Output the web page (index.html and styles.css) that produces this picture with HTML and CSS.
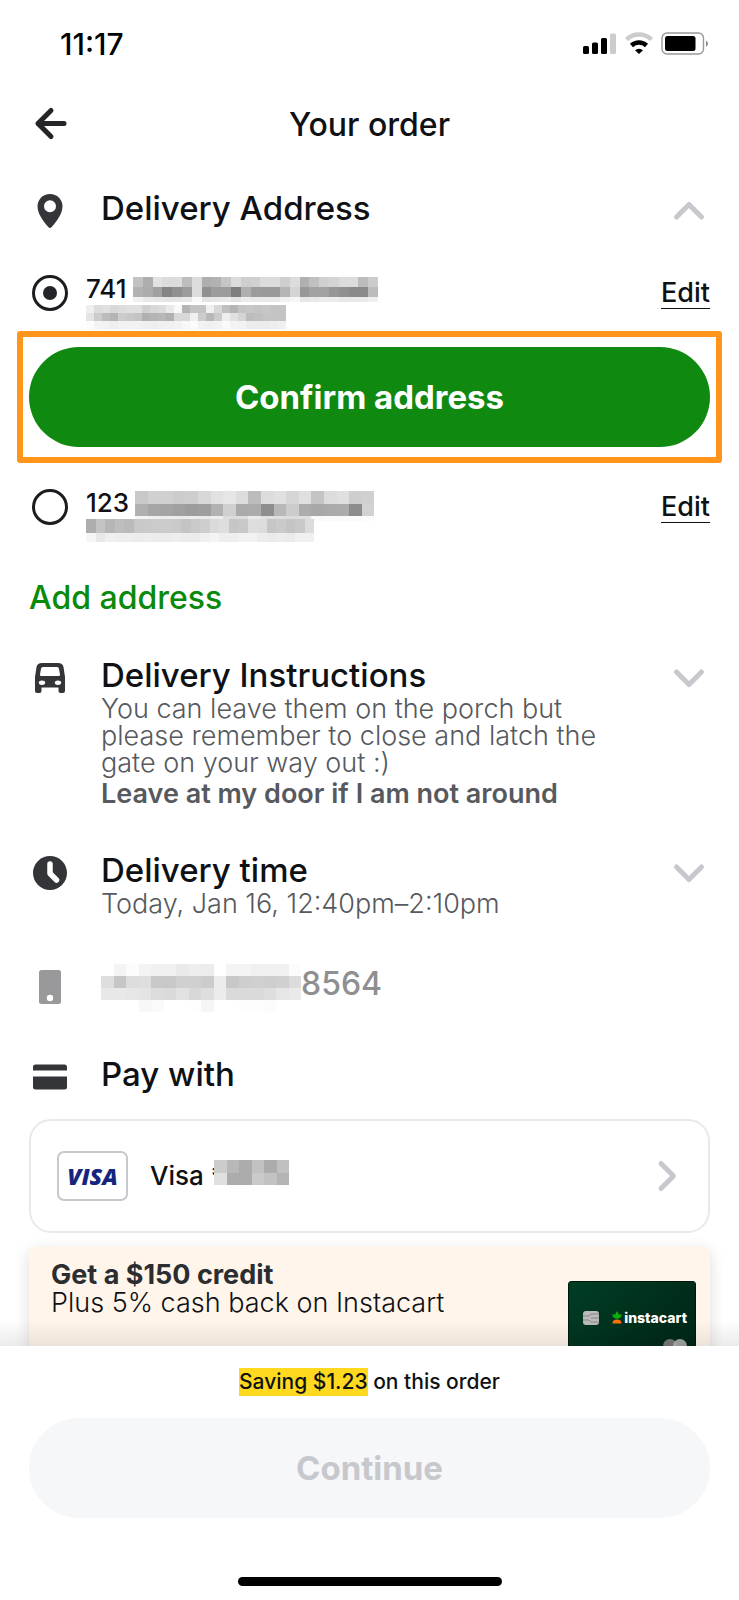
FILE: index.html
```html
<!DOCTYPE html>
<html lang="en">
  <head>
    <meta charset="utf-8">
    <meta name="viewport" content="width=device-width, initial-scale=1">
    <title>Your order</title>
    <link rel="stylesheet" href="styles.css">
  </head>
  <body>
    <main class="page">
      <div class="status-bar">
        <span class="clock">11:17</span>
        <svg class="status-icons" width="128" height="24" viewBox="0 0 128 24" aria-hidden="true">
          <rect x="1" y="14" width="6" height="8" rx="1.5"/>
          <rect x="10" y="10.500" width="6" height="11.500" rx="1.500"/>
          <rect x="19" y="6" width="6" height="16" rx="1.500"/>
          <rect x="28" y="1.500" width="6" height="20.500" rx="1.500" fill="#ccc"/>
          <path d="M44.500 7.500a18 18 0 0 1 25 0" fill="none" stroke="#ccc" stroke-width="4.500"/>
          <path d="M49.500 13.500a11 11 0 0 1 15 0" fill="none" stroke="#000" stroke-width="4.500"/>
          <path d="M57 22l-4-3.800a6 6 0 0 1 8 0z"/>
          <rect x="80" y="1" width="41.500" height="21" rx="5" fill="none" stroke="#999" stroke-width="1.400"/>
          <rect x="83" y="4" width="30.500" height="15" rx="2.500"/>
          <path d="M124 8.500q4 3 0 6.500z" fill="#888"/>
        </svg>
      </div>

      <header class="header">
        <button class="icon-button" type="button" aria-label="Back">
          <svg width="42" height="40" viewBox="0 0 42 40">
            <path d="M22 5.500L9 18.500l13 13M9 18.500h26" fill="none" stroke="#242529" stroke-width="5" stroke-linecap="round" stroke-linejoin="round"/>
          </svg>
        </button>
        <h1>Your order</h1>
      </header>

      <section class="row address-head">
        <svg class="icon" width="42" height="40" viewBox="0 0 42 40">
          <path fill-rule="evenodd" d="M21 3C14 3 8.500 8.500 8.500 15.200c0 7 5.500 15 10.800 20.800q1.700 2 3.400 0c5.300-5.800 10.800-13.800 10.800-20.800C33.500 8.500 28 3 21 3zm0 6.200a6 6 0 1 1 0 12 6 6 0 0 1 0-12z"/>
        </svg>
        <h2>Delivery Address</h2>
        <button class="icon-button chevron" type="button" aria-label="Hide addresses">
          <svg width="42" height="40" viewBox="0 0 42 40"><path d="M8.500 26L21 13.500 33.500 26"/></svg>
        </button>
      </section>

      <div class="option">
        <input type="radio" name="address" id="address-741" checked>
        <label for="address-741">
          <span class="line">741 <svg class="mosaic" data-mosaic="street1" aria-hidden="true"></svg></span>
          <svg class="mosaic" data-mosaic="city1" aria-hidden="true"></svg>
        </label>
        <a href="#" class="edit">Edit</a>
      </div>

      <div class="highlight">
        <button class="button confirm" type="button">Confirm address</button>
      </div>

      <div class="option">
        <input type="radio" name="address" id="address-123">
        <label for="address-123">
          <span class="line">123 <svg class="mosaic" data-mosaic="street2" aria-hidden="true"></svg></span>
          <svg class="mosaic" data-mosaic="city2" aria-hidden="true"></svg>
        </label>
        <a href="#" class="edit">Edit</a>
      </div>

      <a href="#" class="add-address">Add address</a>

      <section class="row">
        <svg class="icon" width="42" height="40" viewBox="0 0 42 40">
          <path fill-rule="evenodd" d="M13 5h16c3 0 5 1.500 5.500 4l1.500 10v14q0 2-2 2h-2.500q-2 0-2-2v-3.500h-17V33q0 2-2 2H8q-2 0-2-2V19L7.500 9C8 6.500 10 5 13 5zm1 4q-1.800 0-2 1.700l-1 5.800q-.2 1.500 1.200 1.500h17.600q1.400 0 1.200-1.500l-1-5.800Q29.800 9 28 9zM13 22.500c-2.400 0-3.200 1-3.200 2.200s.8 2.200 3.200 2.200 3.200-1 3.200-2.200-.8-2.200-3.200-2.200zm16 0c-2.400 0-3.200 1-3.200 2.200s.8 2.200 3.200 2.200 3.200-1 3.200-2.200-.8-2.200-3.200-2.200z"/>
        </svg>
        <div class="details">
          <h2>Delivery Instructions</h2>
          <p>You can leave them on the porch but please remember to close and latch the gate on your way out :)</p>
          <p class="strong">Leave at my door if I am not around</p>
        </div>
        <button class="icon-button chevron" type="button" aria-label="Edit delivery instructions">
          <svg width="42" height="40" viewBox="0 0 42 40"><path d="M8.500 14L21 26.500 33.500 14"/></svg>
        </button>
      </section>

      <section class="row time">
        <svg class="icon" width="42" height="40" viewBox="0 0 42 40">
          <circle cx="21" cy="20" r="17"/>
          <path d="M21 11v9.500l6.500 6.500" fill="none" stroke="#fff" stroke-width="5.500" stroke-linecap="round" stroke-linejoin="round"/>
        </svg>
        <div class="details">
          <h2>Delivery time</h2>
          <p>Today, Jan 16, 12:40pm–2:10pm</p>
        </div>
        <button class="icon-button chevron" type="button" aria-label="Edit delivery time">
          <svg width="42" height="40" viewBox="0 0 42 40"><path d="M8.500 14L21 26.500 33.500 14"/></svg>
        </button>
      </section>

      <section class="row phone">
        <svg class="icon" width="42" height="40" viewBox="0 0 42 40">
          <rect x="10" y="3" width="22" height="34" rx="2.500"/>
          <circle cx="21" cy="31" r="3.200" fill="#fff"/>
        </svg>
        <div class="number"><svg class="mosaic" data-mosaic="phone" aria-hidden="true"></svg>8564</div>
      </section>

      <section class="row pay">
        <svg class="icon" width="42" height="40" viewBox="0 0 42 40">
          <path d="M4 13.500V10q0-2.500 2.500-2.500h29Q38 7.500 38 10v3.500zM4 19.500h34V30q0 2.500-2.500 2.500h-29Q4 32.500 4 30z"/>
        </svg>
        <h2>Pay with</h2>
      </section>

      <button class="payment" type="button">
        <span class="visa">VISA</span>
        <span class="payment-name">Visa *<svg class="mosaic" data-mosaic="card" aria-hidden="true"></svg></span>
        <svg class="next" width="24" height="40" viewBox="0 0 24 40"><path d="M5 7.500L17.500 20 5 32.500"/></svg>
      </button>

      <section class="promo">
        <div class="promo-text">
          <h3>Get a $150 credit</h3>
          <p>Plus 5% cash back on Instacart</p>
        </div>
        <div class="credit-card">
          <svg width="16" height="14" viewBox="0 0 16 14" aria-hidden="true">
            <rect width="16" height="14" rx="3" fill="#bbb"/>
            <path d="M0 5h6l2-2h8M0 9h6l2 2h8M8 7h8" fill="none" stroke="#888"/>
          </svg>
          <span class="brand">
            <svg width="10" height="13" viewBox="0 0 10 13" aria-hidden="true">
              <path d="M5 8L1.500 6.500 0 3.500h3L5 0l2 3.500h3L8.500 6.500z" fill="#0aad0a"/>
              <path d="M.5 12.500q0-4 4.500-4t4.500 4z" fill="#ff7009"/>
            </svg>instacart
          </span>
          <svg class="rings" width="24" height="14" viewBox="0 0 24 14" aria-hidden="true">
            <circle cx="7" cy="7" r="7" fill="#777"/>
            <circle cx="17" cy="7" r="7" fill="#bbb" fill-opacity=".85"/>
          </svg>
        </div>
      </section>
    </main>

    <footer class="footer">
      <p class="savings"><mark>Saving $1.23</mark> on this order</p>
      <button class="button continue" type="button" disabled>Continue</button>
      <div class="home-indicator"></div>
    </footer>

    <script src="script.js"></script>
  </body>
</html>
```

FILE: styles.css
```css
* {
  box-sizing: border-box;
}

body {
  display: flex;
  flex-direction: column;
  height: 100vh;
  margin: 0;
  background: #fff;
  color: #0f1115;
  font-family: Inter, "Liberation Sans", sans-serif;
  font-size: 27px;
}

h1,
h2,
h3,
p {
  margin: 0;
}

h1,
h2 {
  font-weight: 500;
  line-height: 40px;
}

h1 {
  font-size: 32px;
}

h2 {
  font-size: 33px;
}

button {
  border: 0;
  padding: 0;
  background: none;
  color: inherit;
  font-family: inherit;
  cursor: pointer;
}

svg {
  display: block;
  flex-shrink: 0;
}

.page {
  flex: 1;
  min-height: 0;
  overflow-y: auto;
  scrollbar-width: none;
}

/* top bars */
.status-bar {
  display: flex;
  justify-content: space-between;
  align-items: center;
  padding: 24px 29px 0 60px;
  line-height: 40px;
}

.clock {
  color: #000;
  font-size: 30px;
  font-weight: 500;
}

.header {
  display: grid;
  grid-template-columns: 42px 1fr 42px;
  padding: 41px 29px 0;
}

.header h1 {
  text-align: center;
}

/* sections */
.row {
  display: grid;
  grid-template-columns: 42px 1fr 42px;
  column-gap: 30px;
  align-items: start;
  padding: 37px 29px 0;
}

.address-head {
  padding-top: 43px;
}

.icon {
  margin-top: 3px;
  fill: #343538;
}

.chevron {
  margin-top: 3px;
}

.chevron path,
.next path {
  fill: none;
  stroke: #c7c8cd;
  stroke-width: 5;
  stroke-linecap: round;
  stroke-linejoin: round;
}

.details p {
  max-width: 510px;
  color: #56595e;
  font-weight: 300;
  line-height: 27px;
}

.details .strong {
  margin-top: 4px;
  font-weight: 600;
}

/* addresses */
.option {
  display: flex;
  align-items: flex-start;
  padding: 44px 29px 0 32px;
}

.option input {
  display: grid;
  place-items: center;
  width: 36px;
  height: 36px;
  margin: 0 18px 0 0;
  border: 3px solid #1b1d21;
  border-radius: 50%;
  appearance: none;
}

.option input:checked::before {
  content: "";
  width: 14px;
  height: 14px;
  border-radius: 50%;
  background: #242529;
}

.option label {
  flex: 1;
  padding-top: 2px;
  font-size: 26px;
  font-weight: 500;
}

.line {
  display: flex;
  gap: 6px;
  height: 28px;
  line-height: 24px;
}

.edit {
  margin-top: 3px;
  border-bottom: 1px solid #0f1115;
  color: inherit;
  font-weight: 500;
  line-height: 30px;
  text-decoration: none;
}

.highlight {
  margin: 2px 17px 0;
  border: 6px solid #ff961b;
  border-radius: 3px;
  padding: 10px 6px;
}

.highlight + .option {
  padding-top: 26px;
}

.button {
  display: block;
  width: 100%;
  height: 100px;
  border-radius: 50px;
  font-size: 33px;
  font-weight: 700;
}

.confirm {
  background: #108910;
  color: #fff;
}

.add-address {
  display: inline-block;
  margin: 36px 29px 0;
  color: #0a8a0a;
  font-size: 32px;
  font-weight: 500;
  line-height: 40px;
  text-decoration: none;
}

/* time, phone, payment */
.time {
  padding-top: 43px;
}

.phone {
  padding-top: 47px;
}

.phone .icon {
  fill: #99999b;
}

.number {
  display: flex;
  color: #8f8f91;
  font-size: 32px;
  font-weight: 500;
  line-height: 40px;
}

.pay {
  padding-top: 42px;
}

.payment {
  display: flex;
  align-items: center;
  width: calc(100% - 58px);
  margin: 22px 29px 0;
  border: 2px solid #e8e9eb;
  border-radius: 22px;
  padding: 30px 28px 30px 26px;
  font-size: 26px;
  font-weight: 500;
}

.visa {
  width: 71px;
  height: 50px;
  margin-right: 22px;
  border: 2px solid #c7c8cd;
  border-radius: 7px;
  color: #15257e;
  font-family: "Open Sans", sans-serif;
  font-size: 23px;
  font-style: italic;
  font-weight: 800;
  line-height: 46px;
  text-align: center;
}

.payment-name {
  display: flex;
  flex: 1;
  line-height: 32px;
}

.payment-name .mosaic {
  margin-left: -10px;
}

/* credit card offer */
.promo {
  display: flex;
  justify-content: space-between;
  margin: 14px 29px 0;
  border-radius: 6px;
  padding: 14px 14px 14px 22px;
  background: #fff5eb;
  box-shadow: 0 4px 16px rgba(0, 0, 0, 0.14);
}

.promo h3,
.promo p {
  font-size: 27px;
  line-height: 28px;
}

.promo h3 {
  color: #2b2d31;
  font-weight: 700;
}

.promo p {
  font-weight: 300;
}

.credit-card {
  display: grid;
  grid-template-columns: auto auto;
  align-content: start;
  justify-content: space-between;
  row-gap: 14px;
  width: 128px;
  height: 81px;
  margin-top: 20px;
  border: 1px solid #00190f;
  border-radius: 3px;
  padding: 29px 8px 0 14px;
  background: linear-gradient(135deg, #003d24, #002415);
}

.brand {
  display: flex;
  gap: 2px;
  color: #fff;
  font-size: 14px;
  font-weight: 800;
  line-height: 14px;
}

.rings {
  grid-column: 2;
  justify-self: end;
}

/* bottom bar */
.footer {
  position: relative;
  padding: 22px 29px 14px;
  background: #fff;
}

/* shade cast over the end of the list */
.footer::before {
  content: "";
  position: absolute;
  right: 0;
  bottom: 100%;
  left: 0;
  height: 26px;
  background: linear-gradient(to top, rgba(0, 0, 0, 0.08), transparent);
}

.savings {
  margin-bottom: 22px;
  font-size: 21px;
  font-weight: 500;
  line-height: 28px;
  text-align: center;
}

.savings mark {
  display: inline-block;
  background: #ffd91f;
  color: inherit;
}

.continue {
  background: #f6f7f8;
  color: #c7c8cd;
}

.home-indicator {
  width: 264px;
  height: 9px;
  margin: 59px auto 0;
  border-radius: 5px;
  background: #000;
}
```

FILE: script.js
```js
// Private details are hidden behind grey blocks.
// One string per row of blocks, two hex digits of grey per block.
const mosaics = {
  street1: {
    cell: [9.8, 10, 5],
    rows: [
      'c2aee2dcdcbedcaeb2c6dcced0dcdccedcb0c0d0d4dcdcbccc',
      'b2aca084909cdc909c9c7eb09c9a9ab4d498a2a296908a8abc',
      'f0e8e6e4e4e8f8e4e6e8e2eceaeaeaf0f6e6e8ecece8e8eaf0'
    ]
  },
  city1: {
    cell: [8, 8, 8],
    rows: [
      'eedce0d8dce0e0d0d8dceaf8b4c4c4f0d8c0b4c4c8c4c8c4c4',
      'e4ccbcb4ccc8c4b0b4b8b0d8d8f0ccb8cceee0d4bcc0c4c4c4',
      'fcf4f2eef2f2f2f0eef0f0f2f8fcf2f0f2faf4f2ecececeef0'
    ]
  },
  street2: {
    cell: [12.6, 12.5, 5],
    rows: [
      'c8d0d0ccced8e2e6dcbcdce0d6e0c4dce0ced0',
      'b0a6a4a09c9eb2d0aaac8eb8ccaca8aaac8cd2',
      'f4f0ecececeaeedcdeeae0dedcdefafafafafc'
    ]
  },
  city2: {
    cell: [9.5, 14, 9],
    rows: [
      'aec4b6bebac8cacccccac4cacedadec6c8dedcc6cac4c8dc',
      'f6e8f0eeeeeceeececeeececf0f4eeeef2f2eceaeceaf0f0'
    ]
  },
  phone: {
    cell: [12.5, 12, 12],
    rows: [
      'fff4fcf4f0f0eaeeecfff4f4f0f0f0fc',
      'dec6dcdec8c8d0d0ccecc8ced0ced0dc',
      'e8e8e6e4dcdae2d8deecdadadadee6ea',
      'fffffff8fafffffef6fffffdfdfcffff'
    ]
  },
  card: {
    cell: [12.5, 12.5, 12.5],
    rows: [
      'ccb8acc2acc0',
      'e0acaccac2b4'
    ]
  }
};

document.querySelectorAll('[data-mosaic]').forEach(svg => {
  const { cell, rows } = mosaics[svg.dataset.mosaic];
  const [width, height] = cell;
  let columns = 0;
  let blocks = '';
  rows.forEach((row, y) => {
    const greys = row.match(/../g);
    columns = Math.max(columns, greys.length);
    greys.forEach((grey, x) => {
      blocks += `<rect x="${x * width}" y="${y * height}" width="${width}" height="${height}" fill="#${grey.repeat(3)}"/>`;
    });
  });
  svg.setAttribute('width', Math.round(columns * width));
  svg.setAttribute('height', Math.round((rows.length - 1) * height + cell[2]));
  svg.setAttribute('shape-rendering', 'crispEdges');
  svg.innerHTML = blocks;
});
```
